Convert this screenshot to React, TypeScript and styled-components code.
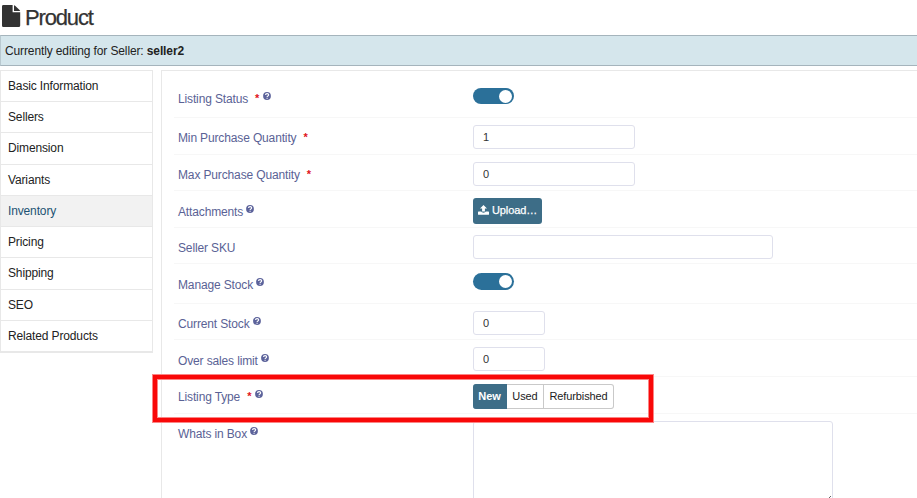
import React from "react";
import styled, { createGlobalStyle } from "styled-components";

const GlobalStyle = createGlobalStyle`
  * { box-sizing: border-box; }
  html, body { margin: 0; overflow: hidden; background: #fff; }
  body, button, input, textarea { font-family: "Liberation Sans", Arial, sans-serif; font-size: 12px; }
`;

const Page = styled.div`
  width: 100%;
  height: 498px;
  overflow: hidden;
  position: relative;
  color: #222;
`;

const Header = styled.header`
  display: flex;
  align-items: flex-start;
  height: 35px;
  padding: 5px 0 0 2px;
`;

const Title = styled.h1`
  margin: 0 0 0 4px;
  font-size: 22px;
  font-weight: 400;
  line-height: 25px;
  letter-spacing: -1.15px;
  color: #333;
  -webkit-text-stroke: 0.25px #333;
`;

const Notice = styled.div`
  height: 31px;
  line-height: 30px;
  letter-spacing: -0.12px;
  background: #d5e6ec;
  border: solid #a5b4bc;
  border-width: 1px 0;
  border-left: 1px solid #b9c9d0;
  padding-left: 4px;
`;

const Content = styled.div`
  display: flex;
  gap: 8px;
  padding-top: 4px;
`;

const Nav = styled.nav`
  width: 153px;
  flex: none;
  align-self: flex-start;
  border: 1px solid #e8e8e8;
  border-bottom-width: 2px;
`;

const NavItem = styled.a<{ $height: number; $active?: boolean }>`
  display: block;
  height: ${(p) => p.$height}px;
  padding-left: 7px;
  line-height: 30px;
  letter-spacing: -0.14px;
  color: ${(p) => (p.$active ? "#1d5273" : "#222")};
  background: ${(p) => (p.$active ? "#f2f2f2" : "#fff")};
  border-bottom: 1px solid #e8e8e8;
  &:last-child { border-bottom: 0; }
`;

const Panel = styled.main`
  flex: 1;
  height: 440px;
  padding-left: 12px;
  border: solid #e8e8e8;
  border-width: 1px 0 0 1px;
`;

const Row = styled.div<{ $height: number; $top: number }>`
  display: flex;
  align-items: flex-start;
  height: ${(p) => p.$height}px;
  padding: ${(p) => p.$top}px 0 0 4px;
  border-bottom: 1px solid #f7f7f7;
`;

const Label = styled.label<{ $drop: number }>`
  display: flex;
  flex: none;
  width: 295px;
  margin-top: ${(p) => p.$drop}px;
  line-height: 16px;
  letter-spacing: -0.14px;
  color: #5a6295;
`;

const Required = styled.span`
  margin-left: 7px;
  width: 5px;
  font-size: 11px;
  font-weight: 700;
  line-height: 15px;
  letter-spacing: 0;
  color: #e0131b;
`;

const HelpIcon = styled.svg`
  width: 8px;
  height: 8px;
  margin: 1px 0 0 3px;
`;

const Input = styled.input<{ $width: number }>`
  width: ${(p) => p.$width}px;
  height: 24px;
  padding: 0 9px 1px;
  font-size: 11px;
  color: #333;
  border: 1px solid #dfe0ec;
  border-radius: 3px;
  outline: 0;
`;

const Toggle = styled.span<{ $height: number }>`
  display: flex;
  align-items: center;
  justify-content: flex-end;
  width: 41px;
  height: ${(p) => p.$height}px;
  padding-right: 2px;
  border-radius: 9px;
  background: #2b7099;
`;

const Knob = styled.span`
  width: 13px;
  height: 13px;
  border-radius: 50%;
  background: #fff;
`;

const UploadButton = styled.button`
  display: flex;
  align-items: center;
  gap: 3px;
  width: 69px;
  height: 26px;
  padding: 0 0 2px 5px;
  border: 0;
  border-radius: 3px;
  font-size: 11px;
  letter-spacing: -0.1px;
  color: #fff;
  -webkit-text-stroke: 0.25px #fff;
  background: #3d6d87;
`;

const Choices = styled.div`
  display: flex;
  height: 25px;
`;

const Choice = styled.button<{ $width: number; $selected?: boolean }>`
  width: ${(p) => p.$width}px;
  padding: 0 0 1px;
  font-size: 11px;
  letter-spacing: -0.1px;
  font-weight: ${(p) => (p.$selected ? 700 : 400)};
  color: ${(p) => (p.$selected ? "#fff" : "#222")};
  background: ${(p) => (p.$selected ? "#3d6d87" : "#fff")};
  border: solid ${(p) => (p.$selected ? "#3d6d87" : "#c9c9c9")};
  border-width: 1px 1px 1px 0;
  &:first-child { border-radius: 3px 0 0 3px; }
  &:last-child { border-radius: 0 3px 3px 0; }
`;

const TextArea = styled.textarea`
  width: 360px;
  height: 84px;
  border: 1px solid #dfe0ec;
  border-radius: 3px;
  outline: 0;
  resize: vertical;
`;

const Highlight = styled.div`
  position: absolute;
  left: 152px;
  top: 374px;
  width: 502px;
  height: 49px;
  border: 5px solid #f90808;
  outline: 1px solid #fb8585;
  outline-offset: -1px;
  box-shadow: inset 0 0 0 1px #fb8585;
  pointer-events: none;
`;

const Help = () => (
  <HelpIcon viewBox="0 0 16 16" aria-label="Help">
    <circle cx="8" cy="8" r="7.8" fill="#5c639b" />
    <path d="M5 6.1c.2-4 6.6-3.7 6.3 0C11.1 8 8.2 8 8.1 10" fill="none" stroke="#fff" strokeWidth="2.2" />
    <path d="M7 11.3h2.3v2.2H7z" fill="#fff" />
  </HelpIcon>
);

const FileIcon = () => (
  <svg width="19" height="22" viewBox="0 0 19 22" fill="#333">
    <path d="M1.2 0H10.6v7.2h7.6v13.3c0 .9-.6 1.5-1.4 1.5H1.2C.5 22 0 21.4 0 20.5v-19C0 .6.5 0 1.2 0z" />
    <path d="M12 .2c.5.1.8.3 1.1.6l4.2 4c.4.4.6.6.8 1.1H12z" />
  </svg>
);

const UploadIcon = () => (
  <svg width="11" height="10" viewBox="0 0 11 10" fill="#fff">
    <path d="M5.5 0 9 3.6H6.9v3H4.1v-3H2z" />
    <path d="M.6 6.6h2.7c.3.7 1 1.1 2.2 1.1s1.9-.4 2.2-1.1h2.7c.4 0 .6.2.6.6v2c0 .4-.2.6-.6.6H.6c-.4 0-.6-.2-.6-.6v-2c0-.4.2-.6.6-.6z" />
  </svg>
);

interface FieldProps {
  label: string;
  height: number;
  top?: number;
  drop: number;
  required?: boolean;
  help?: boolean;
  children: React.ReactNode;
}

const Field = ({ label, height, top = 7, drop, required, help, children }: FieldProps) => (
  <Row $height={height} $top={top}>
    <Label $drop={drop}>
      {label}
      {required && <Required>*</Required>}
      {help && <Help />}
    </Label>
    {children}
  </Row>
);

const Switch = ({ height }: { height: number }) => (
  <Toggle $height={height} role="switch" aria-checked="true"><Knob /></Toggle>
);

const sections: [string, number][] = [
  ["Basic Information", 31], ["Sellers", 31], ["Dimension", 32],
  ["Variants", 31], ["Inventory", 31], ["Pricing", 31],
  ["Shipping", 32], ["SEO", 31], ["Related Products", 30],
];

export default function App() {
  return (
    <Page>
      <GlobalStyle />
      <Header><FileIcon /><Title>Product</Title></Header>
      <Notice>Currently editing for Seller: <b>seller2</b></Notice>
      <Content>
        <Nav>
          {sections.map(([name, height]) => (
            <NavItem key={name} $height={height} $active={name === "Inventory"}>{name}</NavItem>
          ))}
        </Nav>
        <Panel>
          <Field label="Listing Status" height={47} top={17} drop={3} required help><Switch height={16} /></Field>
          <Field label="Min Purchase Quantity" height={37} drop={5} required><Input $width={162} defaultValue="1" /></Field>
          <Field label="Max Purchase Quantity" height={36} drop={5} required><Input $width={162} defaultValue="0" /></Field>
          <Field label="Attachments" height={37} drop={6} help>
            <UploadButton><UploadIcon />Upload…</UploadButton>
          </Field>
          <Field label="Seller SKU" height={36} drop={5}><Input $width={300} /></Field>
          <Field label="Manage Stock" height={40} top={9} drop={4} help><Switch height={17} /></Field>
          <Field label="Current Stock" height={36} drop={5} help><Input $width={72} defaultValue="0" /></Field>
          <Field label="Over sales limit" height={37} drop={6} help><Input $width={72} defaultValue="0" /></Field>
          <Field label="Listing Type" height={37} drop={5} required help>
            <Choices>
              <Choice $width={34} $selected>New</Choice>
              <Choice $width={37}>Used</Choice>
              <Choice $width={70}>Refurbished</Choice>
            </Choices>
          </Field>
          <Field label="Whats in Box" height={100} drop={5} help><TextArea /></Field>
        </Panel>
      </Content>
      <Highlight />
    </Page>
  );
}
